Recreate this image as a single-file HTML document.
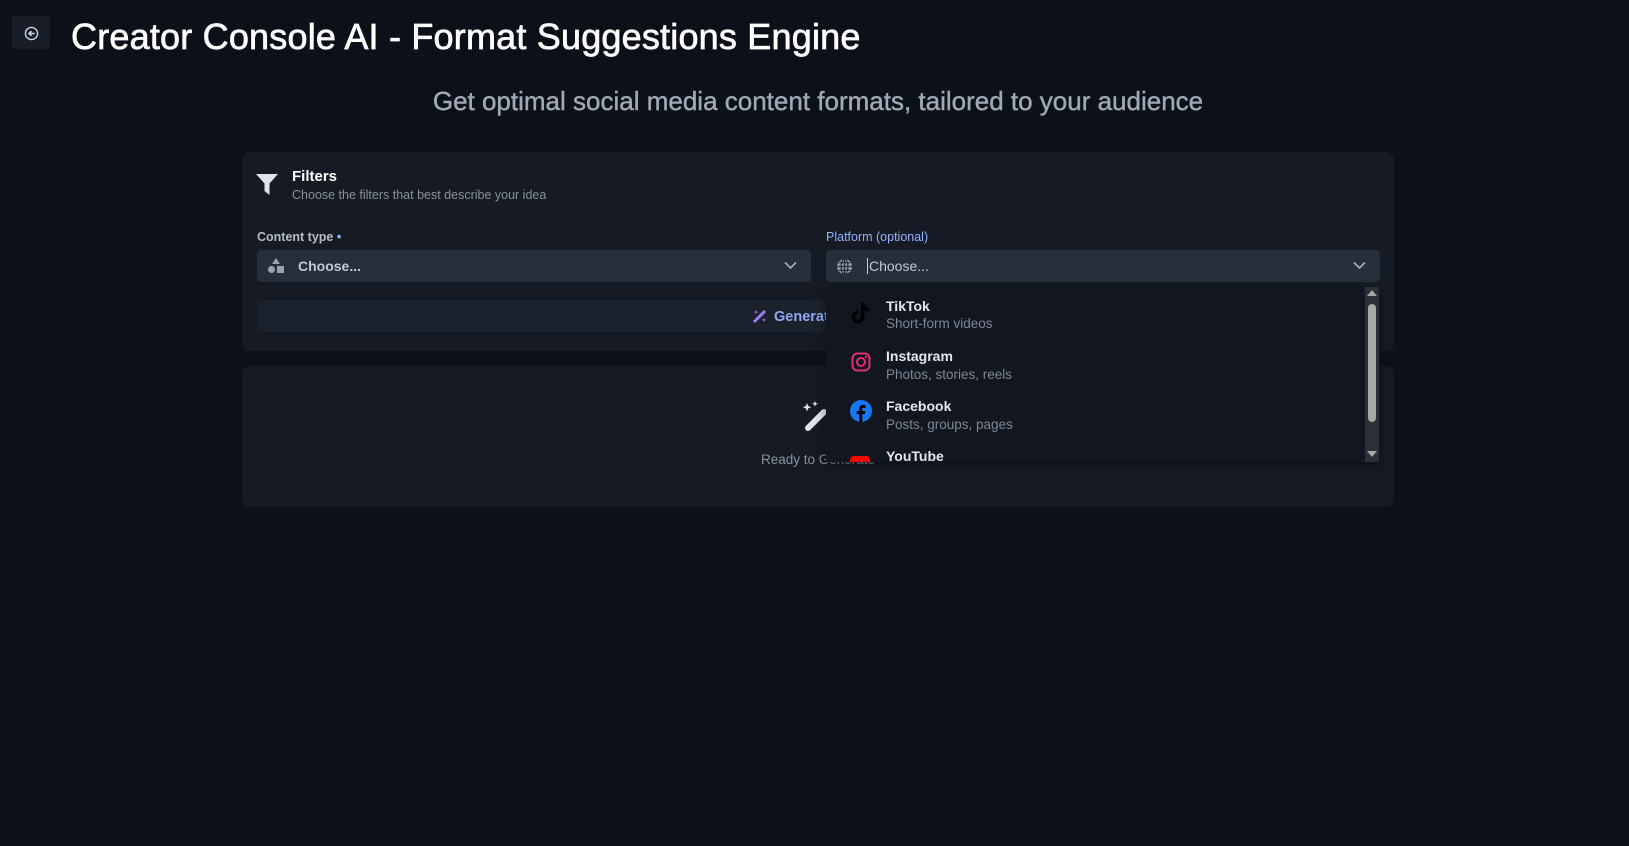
<!DOCTYPE html>
<html><head><meta charset="utf-8"><style>
*{box-sizing:border-box;margin:0;padding:0}
body{width:1629px;height:846px;background:#0c1019;font-family:"Liberation Sans",sans-serif;position:relative;overflow:hidden;color:#fff}
.abs{position:absolute}
.back{left:12px;top:16px;width:38px;height:33px;background:#181d27;border-radius:3px}
h1{position:absolute;left:71px;top:16px;font-size:36px;font-weight:normal;color:#fff;letter-spacing:0.2px;-webkit-text-stroke:0.7px #fff}
.sub{left:0;width:1636px;text-align:center;top:86px;font-size:26px;color:#a1a9b6;-webkit-text-stroke:0.4px #a1a9b6}
.card{background:#151a24;border-radius:8px}
.lbl{font-size:12.5px;font-weight:bold}
.sel{background:#262e3b;border-radius:4px;height:32px;top:250px}
.sel .t{position:absolute;left:41px;top:8px;font-size:14px;color:#c4c9d1}
.dd{left:826px;top:286px;width:554px;height:176px;background:#111620;box-shadow:0 4px 10px rgba(0,0,0,.4);overflow:hidden}
.it{position:absolute;left:60px;font-size:14px;font-weight:bold;color:#e6e8ec}
.is{position:absolute;left:60px;font-size:13.5px;color:#7f8794}
</style></head><body>
<div class="abs back"><svg class="abs" style="left:12px;top:10px" width="15" height="15" viewBox="0 0 16 16"><circle cx="8" cy="8" r="6.5" fill="none" stroke="#c9d3e6" stroke-width="1.5"/><path d="M11.5 8H5.5M8 5.5L5.3 8 8 10.5" fill="none" stroke="#c9d3e6" stroke-width="1.7"/></svg></div>
<h1>Creator Console AI - Format Suggestions Engine</h1>
<div class="abs sub">Get optimal social media content formats, tailored to your audience</div>

<div class="abs card" style="left:242px;top:152px;width:1152px;height:199px"></div>
<svg class="abs" style="left:256px;top:174px" width="22" height="21" viewBox="0 0 22 21"><path d="M0 0H22L13.5 9.5V21L8.5 17V9.5Z" fill="#dfe3ea"/></svg>
<div class="abs" style="left:292px;top:168px;font-size:15px;font-weight:bold">Filters</div>
<div class="abs" style="left:292px;top:188px;font-size:12.5px;color:#8a919d">Choose the filters that best describe your idea</div>
<div class="abs lbl" style="left:257px;top:230px;color:#b7bdc7">Content type <span style="color:#8fb3ff">•</span></div>
<div class="abs lbl" style="left:826px;top:230px;color:#8fb3ff;font-weight:normal">Platform (optional)</div>
<div class="abs sel" style="left:257px;width:554px"><svg class="abs" style="left:10px;top:8px" width="18" height="16" viewBox="0 0 18 16"><path d="M9 0L13 6H5Z" fill="#9aa2ae"/><circle cx="4.5" cy="11.5" r="3.5" fill="#9aa2ae"/><rect x="10" y="8" width="7" height="7" fill="#9aa2ae"/></svg><span class="t" style="font-weight:bold">Choose...</span><svg class="abs" style="right:14px;top:11px" width="13" height="9" viewBox="0 0 13 9"><path d="M1 1.5L6.5 7 12 1.5" fill="none" stroke="#aab1bc" stroke-width="1.6"/></svg></div>
<div class="abs sel" style="left:826px;width:554px"><svg class="abs" style="left:10px;top:8px" width="17" height="17" viewBox="0 0 16 16"><circle cx="8" cy="8" r="7" fill="#9aa2ae"/><path d="M1 8H15M8 1V15M2.5 4.5H13.5M2.5 11.5H13.5" stroke="#262e3b" stroke-width="1.2"/><ellipse cx="8" cy="8" rx="3.2" ry="7" fill="none" stroke="#262e3b" stroke-width="1.2"/></svg><span class="t" style="border-left:1px solid #ccc;padding-left:1px;left:41px">Choose...</span><svg class="abs" style="right:14px;top:11px" width="13" height="9" viewBox="0 0 13 9"><path d="M1 1.5L6.5 7 12 1.5" fill="none" stroke="#aab1bc" stroke-width="1.6"/></svg></div>
<div class="abs" style="left:257px;top:300px;width:1123px;height:32px;background:#1b212c;border-radius:4px"></div>
<svg class="abs" style="left:752px;top:309px" width="15" height="15" viewBox="0 0 15 15"><path d="M2 13L13 2" stroke="#9b7cf0" stroke-width="3"/><path d="M4 1l.7 1.5L6 3l-1.3.6L4 5l-.7-1.4L2 3l1.3-.5zM12 9l.6 1.3 1.3.6-1.3.6L12 13l-.6-1.5-1.3-.6 1.3-.6z" fill="#9b7cf0"/></svg>
<div class="abs" style="left:774px;top:309px;font-size:14.5px;font-weight:bold;color:#8ea8f2">Generate Suggestions</div>

<div class="abs card" style="left:242px;top:366px;width:1152px;height:141px"></div>
<svg class="abs" style="left:800px;top:401px" width="30" height="30" viewBox="0 0 30 30"><path d="M8 27L24 11" stroke="#dfe3ea" stroke-width="6" stroke-linecap="round"/><path d="M7 2l1.2 3 3 1.2-3 1.2L7 10.5 5.8 7.4 2.8 6.2l3-1.2zM15 0l.8 2 2 .8-2 .8-.8 2-.8-2-2-.8 2-.8z" fill="#dfe3ea"/></svg>
<div class="abs" style="left:0;width:1636px;text-align:center;top:452px;font-size:13.5px;color:#8a919d">Ready to Generate</div>

<div class="abs dd">
  <svg class="abs" style="left:26px;top:17px" width="18" height="21" viewBox="0 0 18 21"><path d="M9 0h3.5c.3 3 2.3 5 5 5v3.5c-2 0-3.6-.6-5-1.6V14a6.5 6.5 0 1 1-6.5-6.5v3.6A3 3 0 1 0 9 14Z" fill="#000"/></svg>
  <div class="it" style="top:12px">TikTok</div><div class="is" style="top:30px">Short-form videos</div>
  <svg class="abs" style="left:25px;top:66px" width="20" height="20" viewBox="0 0 20 20"><rect x="1.5" y="1.5" width="17" height="17" rx="5" fill="none" stroke="#e1306c" stroke-width="2"/><circle cx="10" cy="10" r="4" fill="none" stroke="#e1306c" stroke-width="2"/><circle cx="15" cy="5" r="1.2" fill="#e1306c"/></svg>
  <div class="it" style="top:62px">Instagram</div><div class="is" style="top:81px">Photos, stories, reels</div>
  <svg class="abs" style="left:24px;top:114px" width="22" height="22" viewBox="0 0 22 22"><circle cx="11" cy="11" r="11" fill="#1877f2"/><path d="M12.3 22V14h2.6l.4-3h-3V9.2c0-.9.3-1.5 1.6-1.5h1.6V5c-.3 0-1.2-.1-2.3-.1-2.3 0-3.9 1.4-3.9 4V11H6.7v3h2.6v8z" fill="#000"/></svg>
  <div class="it" style="top:112px">Facebook</div><div class="is" style="top:131px">Posts, groups, pages</div>
  <div class="abs" style="left:24px;top:170px;width:20px;height:10px;background:#f00;border-radius:4px"></div>
  <div class="it" style="top:162px">YouTube</div>
  <div class="abs" style="left:539px;top:1px;width:14px;height:175px;background:#2b2f36"></div>
  <div class="abs" style="left:542px;top:18px;width:8px;height:118px;background:#a8a8a8;border-radius:4px"></div>
  <div class="abs" style="left:541px;top:4px;width:0;height:0;border-left:5px solid transparent;border-right:5px solid transparent;border-bottom:6px solid #a8a8a8"></div>
  <div class="abs" style="left:541px;top:165px;width:0;height:0;border-left:5px solid transparent;border-right:5px solid transparent;border-top:6px solid #a8a8a8"></div>
</div>
</body></html>
